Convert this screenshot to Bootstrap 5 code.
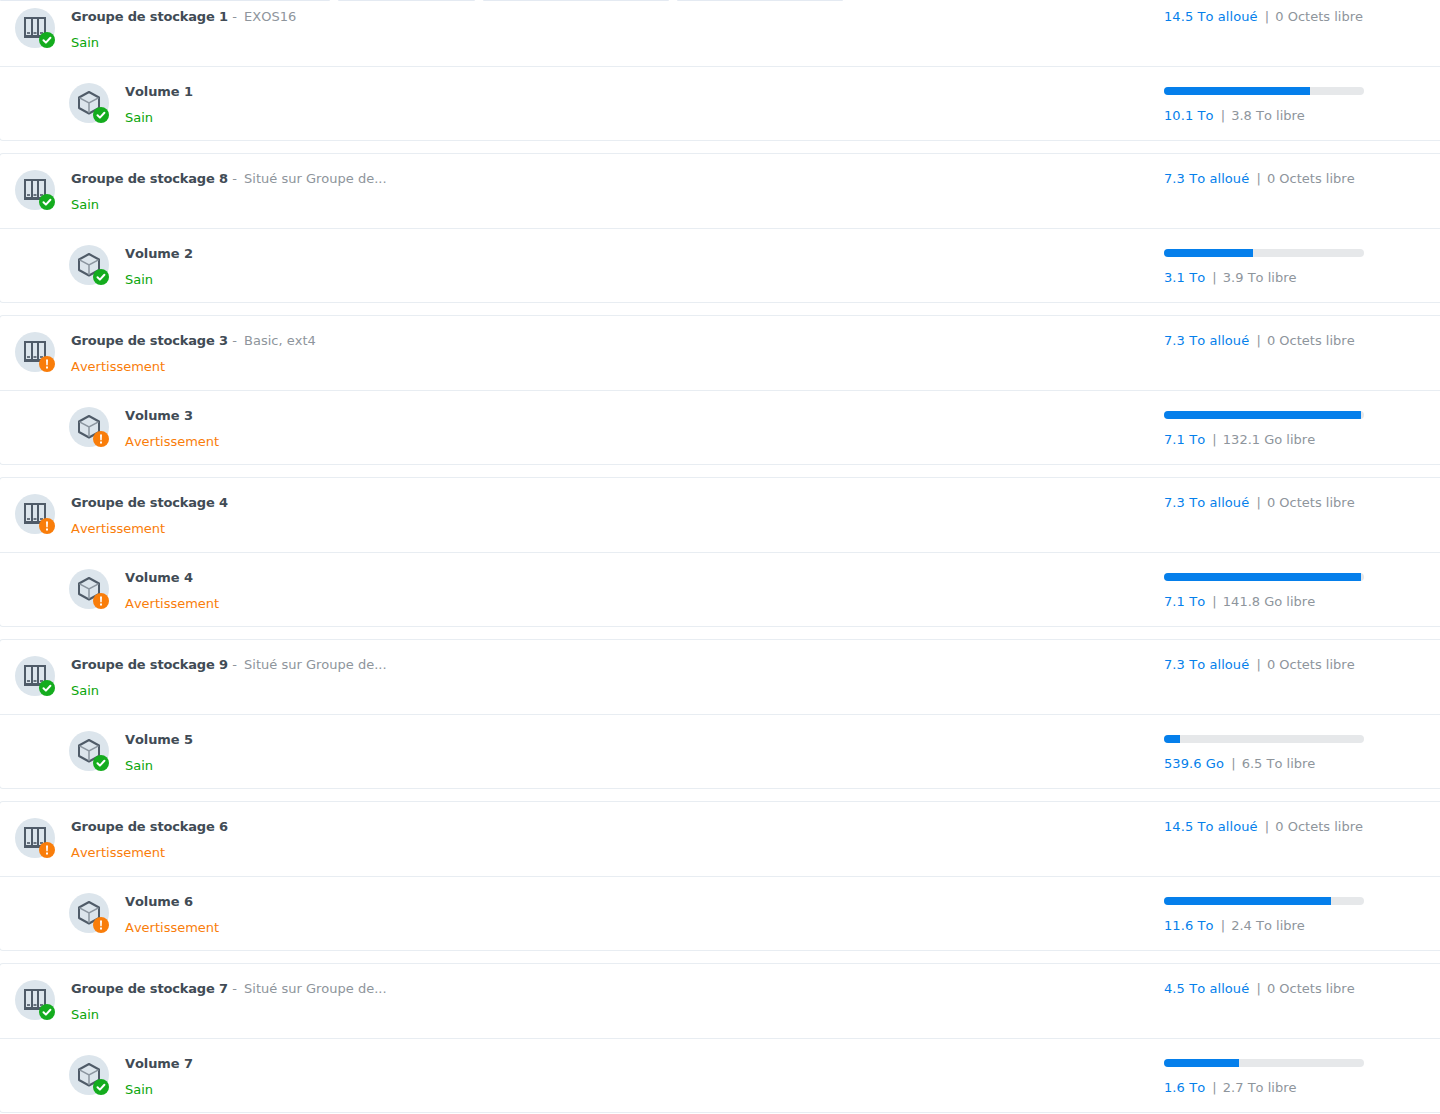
<!DOCTYPE html>
<html lang="fr">
<head>
    <meta charset="UTF-8">
    <meta name="viewport" content="width=device-width, initial-scale=1.0">
    <title>Groupes de stockage</title>

    <!-- Bootstrap CSS -->
    <link href="https://cdn.jsdelivr.net/npm/bootstrap@5.3.0/dist/css/bootstrap.min.css" rel="stylesheet">

    <style>
        body {
            background-color: #fff;
            font-family: "DejaVu Sans", Verdana, sans-serif;
            font-size: 13px;
            line-height: 18px;
            font-kerning: none;
            color: #414b55;
            height: 1114px;
            overflow: hidden;
        }

        .top-tabs {
            height: 2px;
            gap: 8px;
        }

        .top-tabs span {
            background-color: #e4eaf2;
            height: 1px;
            border-radius: 0 0 2px 2px;
        }

        .pool-list {
            margin-top: -11px;
            gap: 12px;
        }

        .pool-card {
            border: 1px solid #e8edf2;
            border-right: 0;
            border-radius: 4px 0 0 4px;
            margin-left: -1px;
        }

        .pool-row {
            height: 74px;
            padding-top: 16px;
            padding-left: 15px;
        }

        .pool-row + .pool-row {
            border-top: 1px solid #e8edf2;
            padding-left: 69px;
        }

        .disk-icon {
            width: 40px;
            height: 40px;
            background-color: #dce5ec;
            flex-shrink: 0;
        }

        .disk-icon > svg.main-glyph {
            width: 24px;
            height: 24px;
            margin: 8px;
            display: block;
        }

        .state-badge {
            width: 16px;
            height: 16px;
            right: 0;
            bottom: 0;
            display: block;
        }

        .row-text {
            margin-left: 16px;
            flex-grow: 1;
        }

        .row-name {
            font-weight: 700;
            white-space: nowrap;
            letter-spacing: -0.1px;
        }

        .group-name {
            letter-spacing: -0.17px;
        }

        .row-desc {
            font-weight: 400;
            color: #8e959c;
            letter-spacing: 0;
        }

        .desc-dash {
            font-style: normal;
            margin-right: 3px;
        }

        .row-state {
            margin-top: 8px;
        }

        .state-ok { color: #0aa50a; }
        .state-warn { color: #f97d0a; }

        .size-col {
            position: absolute;
            left: 1164px;
            top: 0;
            width: 220px;
        }

        .size-line {
            color: #8e959c;
            white-space: nowrap;
        }

        .size-line b {
            font-weight: 400;
            color: #057feb;
            letter-spacing: 0.08px;
        }

        .size-line i {
            font-style: normal;
            margin: 0 2px 0 3px;
        }

        .usage-track {
            width: 200px;
            height: 8px;
            margin-top: 4px;
            margin-bottom: 12px;
            background-color: #e6e8ea;
            border-radius: 4px;
            overflow: hidden;
        }

        .usage-fill {
            height: 8px;
            background-color: #057feb;
        }
    </style>
</head>
<body>

<svg width="0" height="0" class="position-absolute">
    <symbol id="ic-pool" viewBox="0 0 24 24">
        <path fill="#4f5b68" fill-rule="evenodd" d="M1 1h22v21H1zM3 3v16h5V3zm7 0v16h4V3zm6 0v16h5V3z"/>
        <path fill="#68737f" d="M4 16h3v2H4zM10.500 16h3v2h-3zM17 16h3v2h-3z"/>
    </symbol>
    <symbol id="ic-volume" viewBox="0 0 24 24">
        <path fill="none" stroke="#4f5b68" stroke-width="2" stroke-linejoin="round" d="M12 1 22 6.500V17L12 22.500 2 17V6.500z"/>
        <path fill="none" stroke="#8b959f" stroke-width="1.500" d="M2.500 6.800 12 12l9.500-5.200M12 12v10"/>
    </symbol>
    <symbol id="ic-ok" viewBox="0 0 16 16">
        <circle cx="8" cy="8" r="8" fill="#14ac1e"/>
        <path fill="none" stroke="#fff" stroke-width="2" stroke-linecap="round" stroke-linejoin="round" d="m4.500 8.300 2.400 2.300 4.500-4.800"/>
    </symbol>
    <symbol id="ic-warn" viewBox="0 0 16 16">
        <circle cx="8" cy="8" r="8" fill="#f97d0a"/>
        <path fill="#fff" d="M7 3.500h2l-.3 5.800H7.300zM7 10.500h2v2H7z"/>
    </symbol>
</svg>

<div class="top-tabs d-flex">
    <span style="width:330px"></span>
    <span style="width:137px"></span>
    <span style="width:186px"></span>
    <span style="width:166px"></span>
</div>

<div class="pool-list d-flex flex-column">

    <div class="pool-card">
        <div class="pool-row d-flex position-relative">
            <div class="disk-icon rounded-circle position-relative">
                <svg class="main-glyph"><use href="#ic-pool"/></svg>
                <svg class="state-badge position-absolute"><use href="#ic-ok"/></svg>
            </div>
            <div class="row-text">
                <div class="row-name group-name">Groupe de stockage 1 <span class="row-desc"><i class="desc-dash">-</i> EXOS16</span></div>
                <div class="row-state state-ok">Sain</div>
            </div>
            <div class="size-col pt-3"><div class="size-line"><b>14.5 To alloué</b> <i>|</i> 0 Octets libre</div></div>
        </div>
        <div class="pool-row d-flex position-relative">
            <div class="disk-icon rounded-circle position-relative">
                <svg class="main-glyph"><use href="#ic-volume"/></svg>
                <svg class="state-badge position-absolute"><use href="#ic-ok"/></svg>
            </div>
            <div class="row-text">
                <div class="row-name">Volume 1</div>
                <div class="row-state state-ok">Sain</div>
            </div>
            <div class="size-col pt-3"><div class="usage-track"><div class="usage-fill" style="width:146px"></div></div><div class="size-line"><b>10.1 To</b> <i>|</i> 3.8 To libre</div></div>
        </div>
    </div>

    <div class="pool-card">
        <div class="pool-row d-flex position-relative">
            <div class="disk-icon rounded-circle position-relative">
                <svg class="main-glyph"><use href="#ic-pool"/></svg>
                <svg class="state-badge position-absolute"><use href="#ic-ok"/></svg>
            </div>
            <div class="row-text">
                <div class="row-name group-name">Groupe de stockage 8 <span class="row-desc"><i class="desc-dash">-</i> Situé sur Groupe de...</span></div>
                <div class="row-state state-ok">Sain</div>
            </div>
            <div class="size-col pt-3"><div class="size-line"><b>7.3 To alloué</b> <i>|</i> 0 Octets libre</div></div>
        </div>
        <div class="pool-row d-flex position-relative">
            <div class="disk-icon rounded-circle position-relative">
                <svg class="main-glyph"><use href="#ic-volume"/></svg>
                <svg class="state-badge position-absolute"><use href="#ic-ok"/></svg>
            </div>
            <div class="row-text">
                <div class="row-name">Volume 2</div>
                <div class="row-state state-ok">Sain</div>
            </div>
            <div class="size-col pt-3"><div class="usage-track"><div class="usage-fill" style="width:89px"></div></div><div class="size-line"><b>3.1 To</b> <i>|</i> 3.9 To libre</div></div>
        </div>
    </div>

    <div class="pool-card">
        <div class="pool-row d-flex position-relative">
            <div class="disk-icon rounded-circle position-relative">
                <svg class="main-glyph"><use href="#ic-pool"/></svg>
                <svg class="state-badge position-absolute"><use href="#ic-warn"/></svg>
            </div>
            <div class="row-text">
                <div class="row-name group-name">Groupe de stockage 3 <span class="row-desc"><i class="desc-dash">-</i> Basic, ext4</span></div>
                <div class="row-state state-warn">Avertissement</div>
            </div>
            <div class="size-col pt-3"><div class="size-line"><b>7.3 To alloué</b> <i>|</i> 0 Octets libre</div></div>
        </div>
        <div class="pool-row d-flex position-relative">
            <div class="disk-icon rounded-circle position-relative">
                <svg class="main-glyph"><use href="#ic-volume"/></svg>
                <svg class="state-badge position-absolute"><use href="#ic-warn"/></svg>
            </div>
            <div class="row-text">
                <div class="row-name">Volume 3</div>
                <div class="row-state state-warn">Avertissement</div>
            </div>
            <div class="size-col pt-3"><div class="usage-track"><div class="usage-fill" style="width:197px"></div></div><div class="size-line"><b>7.1 To</b> <i>|</i> 132.1 Go libre</div></div>
        </div>
    </div>

    <div class="pool-card">
        <div class="pool-row d-flex position-relative">
            <div class="disk-icon rounded-circle position-relative">
                <svg class="main-glyph"><use href="#ic-pool"/></svg>
                <svg class="state-badge position-absolute"><use href="#ic-warn"/></svg>
            </div>
            <div class="row-text">
                <div class="row-name group-name">Groupe de stockage 4</div>
                <div class="row-state state-warn">Avertissement</div>
            </div>
            <div class="size-col pt-3"><div class="size-line"><b>7.3 To alloué</b> <i>|</i> 0 Octets libre</div></div>
        </div>
        <div class="pool-row d-flex position-relative">
            <div class="disk-icon rounded-circle position-relative">
                <svg class="main-glyph"><use href="#ic-volume"/></svg>
                <svg class="state-badge position-absolute"><use href="#ic-warn"/></svg>
            </div>
            <div class="row-text">
                <div class="row-name">Volume 4</div>
                <div class="row-state state-warn">Avertissement</div>
            </div>
            <div class="size-col pt-3"><div class="usage-track"><div class="usage-fill" style="width:197px"></div></div><div class="size-line"><b>7.1 To</b> <i>|</i> 141.8 Go libre</div></div>
        </div>
    </div>

    <div class="pool-card">
        <div class="pool-row d-flex position-relative">
            <div class="disk-icon rounded-circle position-relative">
                <svg class="main-glyph"><use href="#ic-pool"/></svg>
                <svg class="state-badge position-absolute"><use href="#ic-ok"/></svg>
            </div>
            <div class="row-text">
                <div class="row-name group-name">Groupe de stockage 9 <span class="row-desc"><i class="desc-dash">-</i> Situé sur Groupe de...</span></div>
                <div class="row-state state-ok">Sain</div>
            </div>
            <div class="size-col pt-3"><div class="size-line"><b>7.3 To alloué</b> <i>|</i> 0 Octets libre</div></div>
        </div>
        <div class="pool-row d-flex position-relative">
            <div class="disk-icon rounded-circle position-relative">
                <svg class="main-glyph"><use href="#ic-volume"/></svg>
                <svg class="state-badge position-absolute"><use href="#ic-ok"/></svg>
            </div>
            <div class="row-text">
                <div class="row-name">Volume 5</div>
                <div class="row-state state-ok">Sain</div>
            </div>
            <div class="size-col pt-3"><div class="usage-track"><div class="usage-fill" style="width:16px"></div></div><div class="size-line"><b>539.6 Go</b> <i>|</i> 6.5 To libre</div></div>
        </div>
    </div>

    <div class="pool-card">
        <div class="pool-row d-flex position-relative">
            <div class="disk-icon rounded-circle position-relative">
                <svg class="main-glyph"><use href="#ic-pool"/></svg>
                <svg class="state-badge position-absolute"><use href="#ic-warn"/></svg>
            </div>
            <div class="row-text">
                <div class="row-name group-name">Groupe de stockage 6</div>
                <div class="row-state state-warn">Avertissement</div>
            </div>
            <div class="size-col pt-3"><div class="size-line"><b>14.5 To alloué</b> <i>|</i> 0 Octets libre</div></div>
        </div>
        <div class="pool-row d-flex position-relative">
            <div class="disk-icon rounded-circle position-relative">
                <svg class="main-glyph"><use href="#ic-volume"/></svg>
                <svg class="state-badge position-absolute"><use href="#ic-warn"/></svg>
            </div>
            <div class="row-text">
                <div class="row-name">Volume 6</div>
                <div class="row-state state-warn">Avertissement</div>
            </div>
            <div class="size-col pt-3"><div class="usage-track"><div class="usage-fill" style="width:167px"></div></div><div class="size-line"><b>11.6 To</b> <i>|</i> 2.4 To libre</div></div>
        </div>
    </div>

    <div class="pool-card">
        <div class="pool-row d-flex position-relative">
            <div class="disk-icon rounded-circle position-relative">
                <svg class="main-glyph"><use href="#ic-pool"/></svg>
                <svg class="state-badge position-absolute"><use href="#ic-ok"/></svg>
            </div>
            <div class="row-text">
                <div class="row-name group-name">Groupe de stockage 7 <span class="row-desc"><i class="desc-dash">-</i> Situé sur Groupe de...</span></div>
                <div class="row-state state-ok">Sain</div>
            </div>
            <div class="size-col pt-3"><div class="size-line"><b>4.5 To alloué</b> <i>|</i> 0 Octets libre</div></div>
        </div>
        <div class="pool-row d-flex position-relative">
            <div class="disk-icon rounded-circle position-relative">
                <svg class="main-glyph"><use href="#ic-volume"/></svg>
                <svg class="state-badge position-absolute"><use href="#ic-ok"/></svg>
            </div>
            <div class="row-text">
                <div class="row-name">Volume 7</div>
                <div class="row-state state-ok">Sain</div>
            </div>
            <div class="size-col pt-3"><div class="usage-track"><div class="usage-fill" style="width:75px"></div></div><div class="size-line"><b>1.6 To</b> <i>|</i> 2.7 To libre</div></div>
        </div>
    </div>

</div>

<script src="https://cdn.jsdelivr.net/npm/bootstrap@5.3.0/dist/js/bootstrap.bundle.min.js"></script>
</body>
</html>
